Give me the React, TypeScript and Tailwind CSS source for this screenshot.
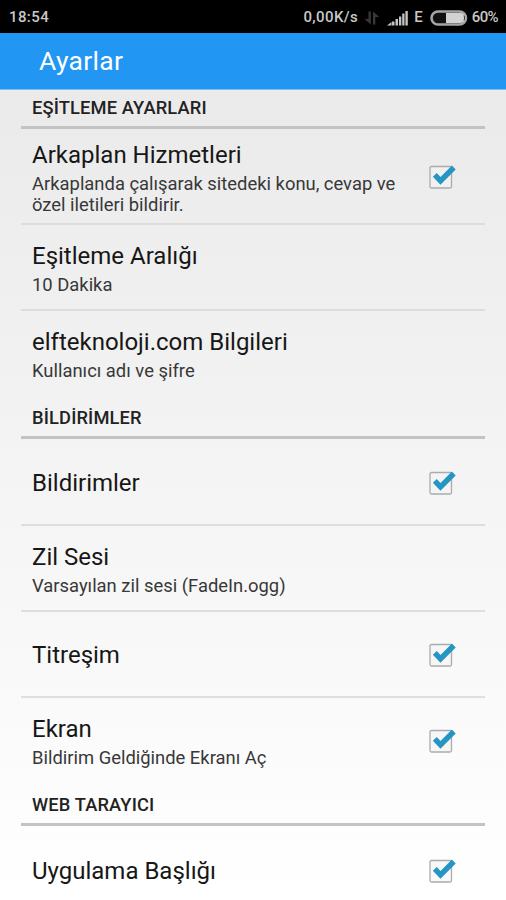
import { clsx } from 'clsx';

interface Setting {
  title: string;
  summary?: string;
  checkable?: boolean;
  height: string;
  divider?: boolean;
}

interface Section {
  title: string;
  height: string;
  settings: Setting[];
}

const SECTIONS: Section[] = [
  {
    title: 'EŞİTLEME AYARLARI',
    height: 'h-[39px]',
    settings: [
      {
        title: 'Arkaplan Hizmetleri',
        summary: 'Arkaplanda çalışarak sitedeki konu, cevap ve özel iletileri bildirir.',
        checkable: true,
        height: 'h-[96px]',
        divider: true,
      },
      { title: 'Eşitleme Aralığı', summary: '10 Dakika', height: 'h-[86px]', divider: true },
      { title: 'elfteknoloji.com Bilgileri', summary: 'Kullanıcı adı ve şifre', height: 'h-[85px]' },
    ],
  },
  {
    title: 'BİLDİRİMLER',
    height: 'h-[43px]',
    settings: [
      { title: 'Bildirimler', checkable: true, height: 'h-[87px]', divider: true },
      { title: 'Zil Sesi', summary: 'Varsayılan zil sesi (FadeIn.ogg)', height: 'h-[86px]', divider: true },
      { title: 'Titreşim', checkable: true, height: 'h-[86px]', divider: true },
      { title: 'Ekran', summary: 'Bildirim Geldiğinde Ekranı Aç', checkable: true, height: 'h-[85px]' },
    ],
  },
  {
    title: 'WEB TARAYICI',
    height: 'h-[43px]',
    settings: [{ title: 'Uygulama Başlığı', checkable: true, height: 'h-[89px]' }],
  },
];

function StatusBar() {
  return (
    <div className="flex h-[33px] shrink-0 items-center bg-black pt-0.5 pr-2 pl-[9px] text-[15px] font-medium text-[#c8c8c8]">
      <span className="w-[41px] tracking-[0.4px]">18:54</span>
      <span className="ml-auto tracking-[0.4px]">0,00K/s</span>
      <svg className="ml-1.5 h-4 w-4" viewBox="0 0 16 16" fill="#383838">
        <path d="M4.500 1.500h2.300v13L0.500 9h4zM9 14.500h2.300V7h4L9 1.500z" />
      </svg>
      <svg className="ml-[7px] h-4 w-[21px]" viewBox="0 0 21 16" fill="#c4c4c4">
        <path d="M0 15.500L4.500 12v3.500zM5 11.500h2.500v4H5zM8.500 9H11v6.500H8.500zM12 6.500h2.300v9H12zM15.200 3.500h2.300v12h-2.300zM18.400 1h2.400v14.500h-2.400z" />
      </svg>
      <span className="ml-1.5">E</span>
      <svg className="ml-[7px] h-4 w-[38px]" viewBox="0 0 38 16">
        <rect x="1.500" y="1.500" width="34.500" height="13" rx="6.500" fill="#111" stroke="#a5a5a5" strokeWidth="2.600" />
        <path d="M16 3h14.500a5 5 0 0 1 0 10H16z" fill="#d2d2d2" />
        <path d="M34 5.500q1.500 2.500 0 5" fill="none" stroke="#333" />
      </svg>
      <span className="ml-1 tracking-[-0.6px]">60%</span>
    </div>
  );
}

function CheckMark() {
  return (
    <svg className="h-[26px] w-[28px] shrink-0" viewBox="0 0 28 26">
      <rect x="2" y="2.500" width="21.500" height="21.500" rx="1.500" fill="#f4f4f4" fillOpacity="0.6" stroke="#ababab" strokeWidth="1.300" />
      <path d="M6.800 10.800L12.500 16.800L25.800 3.500" fill="none" stroke="#2596c4" strokeWidth="5.400" />
    </svg>
  );
}

function SettingRow({ title, summary, checkable, height, divider }: Setting) {
  return (
    <div
      className={clsx(
        'flex items-center justify-between border-b-2 pt-0.5 pr-[29px] pl-[11px]',
        height,
        divider ? 'border-[#d8d8d8]/80' : 'border-transparent',
      )}
    >
      <div className="w-[370px]">
        <div className="text-[24px] leading-[30px] text-[#171717]">{title}</div>
        {summary && <div className="mt-[3px] text-[18.4px] leading-[21px] text-[#383838]">{summary}</div>}
      </div>
      {checkable && <CheckMark />}
    </div>
  );
}

export default function App() {
  return (
    <div className="flex h-[900px] w-[506px] flex-col overflow-hidden bg-linear-to-b from-[#e8e8e8] to-white font-[Roboto,sans-serif]">
      <StatusBar />
      <header className="flex h-[57px] shrink-0 items-center border-b border-[#7fbdf0] bg-[#2196f3] pl-[39px] text-[26.5px] tracking-[0.3px] text-white">
        Ayarlar
      </header>
      <main className="shrink-0 px-[21px]">
        {SECTIONS.map((section) => (
          <section key={section.title}>
            <h2
              className={clsx(
                'flex items-end border-b-3 border-[#c3c3c3] pb-[7px] pl-[11px] text-[18.3px] leading-[22px] font-medium tracking-[0.15px] text-[#222]',
                section.height,
              )}
            >
              {section.title}
            </h2>
            {section.settings.map((setting) => (
              <SettingRow key={setting.title} {...setting} />
            ))}
          </section>
        ))}
      </main>
    </div>
  );
}
